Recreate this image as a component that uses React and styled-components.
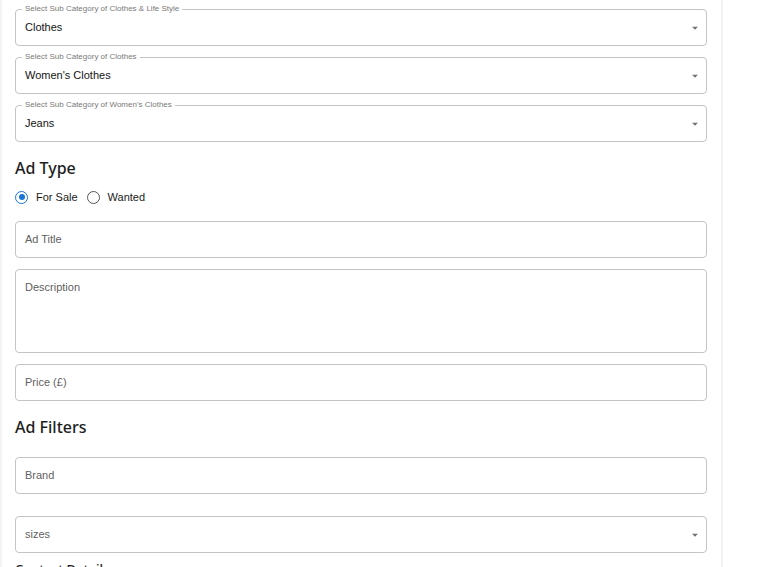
import styled, { createGlobalStyle } from 'styled-components';

const GlobalStyle = createGlobalStyle`
  html, body {
    margin: 0;
    padding: 0;
    background: #ffffff;
  }
  body {
    font-family: "Liberation Sans", Arial, sans-serif;
    overflow: hidden;
  }
`;

const Panel = styled.div`
  width: 723px;
  height: 567px;
  box-sizing: border-box;
  padding: 9px 14px 0 13px;
  border-left: 2px solid #f3f3f3;
  border-right: 2px solid #f3f3f3;
  background: #fff;
  display: flex;
  flex-direction: column;
  overflow: hidden;

  & > * {
    flex-shrink: 0;
  }
`;

const Stack = styled.div`
  display: flex;
  flex-direction: column;
  gap: 11px;
  margin-top: ${props => props.$top || 0}px;
`;

const Box = styled.div`
  position: relative;
  flex-shrink: 0;
  box-sizing: border-box;
  height: ${props => props.$height || 37}px;
  border: 1px solid #c4c4c4;
  border-radius: 4px;
  display: flex;
  align-items: ${props => props.$multi ? 'flex-start' : 'center'};
  padding: ${props => props.$multi ? '10px 10px 0 9px' : '0 10px 0 9px'};
  margin-top: ${props => props.$top || 0}px;
`;

const FloatLabel = styled.span`
  position: absolute;
  top: -6px;
  left: 6px;
  padding: 0 3px;
  background: #fff;
  font-size: 8px;
  line-height: 10px;
  color: #7a7a7a;
  white-space: nowrap;
`;

const Value = styled.span`
  flex: 1;
  font-size: 11px;
  line-height: 15px;
  color: ${props => props.$placeholder ? '#5f5f5f' : '#141414'};
`;

const Arrow = styled.svg`
  width: 14px;
  height: 14px;
  margin-right: -6px;
  fill: #707070;
`;

const Heading = styled.h2`
  margin: ${props => props.$top}px 0 0 0;
  font-family: "Noto Sans", "Open Sans", sans-serif;
  font-weight: 500;
  font-size: 16px;
  line-height: 22px;
  color: #1e1e1e;
`;

const SubHeading = styled.h3`
  margin: 7px 0 0 0;
  font-family: "Noto Sans", "Open Sans", sans-serif;
  font-weight: 500;
  font-size: 13px;
  line-height: 18px;
  color: #1e1e1e;
`;

const RadioRow = styled.div`
  display: flex;
  align-items: center;
  height: 22px;
  margin-top: 7px;
`;

const RadioOption = styled.label`
  display: flex;
  align-items: center;
  gap: 8px;
  margin-right: 9px;
  font-size: 11px;
  color: #1a1a1a;
`;

const RadioCircle = styled.span`
  width: 13px;
  height: 13px;
  box-sizing: border-box;
  border-radius: 50%;
  border: 1.6px solid ${props => props.$checked ? '#1976d2' : '#555'};
  display: flex;
  align-items: center;
  justify-content: center;

  &::after {
    content: '';
    width: 6px;
    height: 6px;
    border-radius: 50%;
    background: ${props => props.$checked ? '#1976d2' : 'transparent'};
  }
`;

const DropArrow = () => (
  <Arrow viewBox="0 0 24 24">
    <path d="M7 10l5 5 5-5z" />
  </Arrow>
);

const SelectField = ({ label, value, top }) => (
  <Box $top={top}>
    {label && <FloatLabel>{label}</FloatLabel>}
    <Value $placeholder={!label}>{value}</Value>
    <DropArrow />
  </Box>
);

const TextField = ({ placeholder, height, multi, top }) => (
  <Box $height={height} $multi={multi} $top={top}>
    <Value $placeholder>{placeholder}</Value>
  </Box>
);

const categories = [
  { label: 'Select Sub Category of Clothes & Life Style', value: 'Clothes' },
  { label: 'Select Sub Category of Clothes', value: "Women's Clothes" },
  { label: "Select Sub Category of Women's Clothes", value: 'Jeans' },
];

export default function App() {
  return (
    <>
      <GlobalStyle />
      <Panel>
        <Stack>
          {categories.map(c => (
            <SelectField key={c.label} label={c.label} value={c.value} />
          ))}
        </Stack>

        <Heading $top={15}>Ad Type</Heading>
        <RadioRow>
          <RadioOption>
            <RadioCircle $checked />
            For Sale
          </RadioOption>
          <RadioOption>
            <RadioCircle />
            Wanted
          </RadioOption>
        </RadioRow>

        <Stack $top={13}>
          <TextField placeholder="Ad Title" />
          <TextField placeholder="Description" height={84} multi />
          <TextField placeholder="Price (£)" />
        </Stack>

        <Heading $top={15}>Ad Filters</Heading>
        <TextField placeholder="Brand" top={19} />
        <SelectField value="sizes" top={22} />
        <SubHeading>Contact Details</SubHeading>
      </Panel>
    </>
  );
}
